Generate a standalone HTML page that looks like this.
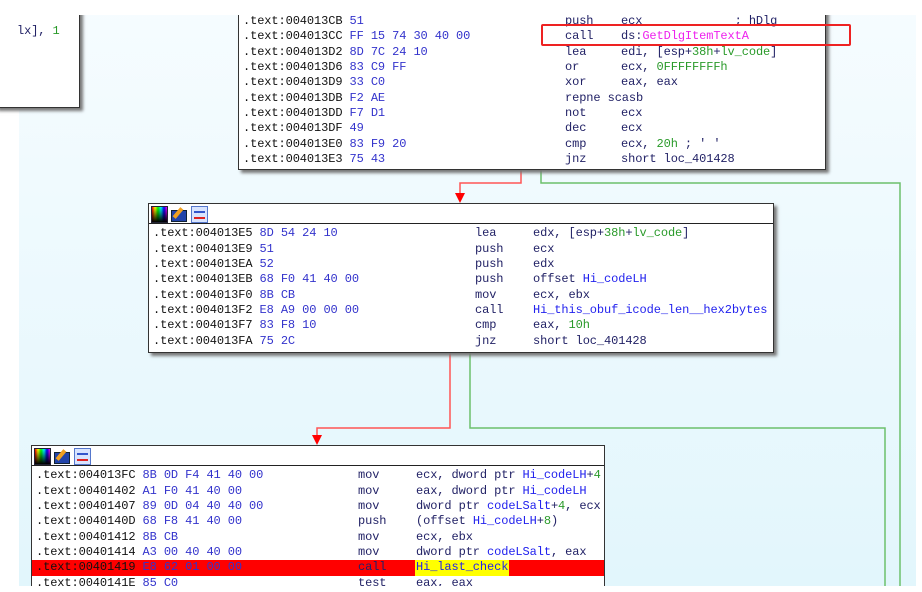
<!DOCTYPE html>
<html style="overflow:hidden"><head><meta charset="utf-8"><style>
html,body{margin:0;width:922px;height:592px;overflow:hidden;}
body{background:#fff;position:relative;font-family:"Liberation Mono",monospace;}
#bg{position:absolute;left:19px;top:0;width:897px;height:586px;background:linear-gradient(#f6fcff,#e2f6fc);}
.blk{position:absolute;background:#fff;border:1px solid #333;box-shadow:3px 3px 3px #777;}
.hdr{position:absolute;left:0;right:0;top:0;height:19px;border-bottom:1px solid #222;}
.r{position:absolute;left:4px;height:15px;font-size:12px;line-height:15px;white-space:pre;color:#111;letter-spacing:-0.1px}
.h{color:#3333cc}.m{position:absolute;color:#222266}.o{position:absolute;color:#222266}
.g{color:#2a9a2a}.b{color:#2222ee}.p{color:#ee22ee}
svg{position:absolute;left:0;top:0}
.mask{position:absolute;background:#fff;z-index:10}
</style></head><body>
<div id="bg"></div>

<div class="blk" style="left:-5px;top:-5px;width:84px;height:111px;border-left:none">
<div class="r" style="left:22px;top:28px"><span class="o" style="left:0">lx], <span class="g">1</span></span></div>
</div>

<svg width="922" height="592">
<polyline points="521,168 521,183 460,183 460,196" fill="none" stroke="#ff5555" stroke-width="1.5"/>
<polygon points="455,193 465,193 460,203" fill="#ff0000"/>
<polyline points="541,168 541,183 900,183 900,592" fill="none" stroke="#6cc06c" stroke-width="1.5"/>
<polyline points="450,351 450,428 317,428 317,438" fill="none" stroke="#ff5555" stroke-width="1.5"/>
<polygon points="312,435 322,435 317,445" fill="#ff0000"/>
<polyline points="470,351 470,428 885,428 885,592" fill="none" stroke="#6cc06c" stroke-width="1.5"/>
</svg>

<div class="blk" style="left:238px;top:-5px;width:586px;height:173px">
<div class="r" style="top:18px">.text:004013CB <span class="h">51</span><span class="m" style="left:322px">push</span><span class="o" style="left:378px">ecx             ; hDlg</span></div>
<div class="r" style="top:33px">.text:004013CC <span class="h">FF 15 74 30 40 00</span><span class="m" style="left:322px">call</span><span class="o" style="left:378px">ds:<span class="p">GetDlgItemTextA</span></span></div>
<div class="r" style="top:49px">.text:004013D2 <span class="h">8D 7C 24 10</span><span class="m" style="left:322px">lea</span><span class="o" style="left:378px">edi, [esp+<span class="g">38h</span>+<span class="g">lv_code</span>]</span></div>
<div class="r" style="top:64px">.text:004013D6 <span class="h">83 C9 FF</span><span class="m" style="left:322px">or</span><span class="o" style="left:378px">ecx, <span class="g">0FFFFFFFFh</span></span></div>
<div class="r" style="top:79px">.text:004013D9 <span class="h">33 C0</span><span class="m" style="left:322px">xor</span><span class="o" style="left:378px">eax, eax</span></div>
<div class="r" style="top:95px">.text:004013DB <span class="h">F2 AE</span><span class="m" style="left:322px">repne scasb</span></div>
<div class="r" style="top:110px">.text:004013DD <span class="h">F7 D1</span><span class="m" style="left:322px">not</span><span class="o" style="left:378px">ecx</span></div>
<div class="r" style="top:125px">.text:004013DF <span class="h">49</span><span class="m" style="left:322px">dec</span><span class="o" style="left:378px">ecx</span></div>
<div class="r" style="top:141px">.text:004013E0 <span class="h">83 F9 20</span><span class="m" style="left:322px">cmp</span><span class="o" style="left:378px">ecx, <span class="g">20h</span> ; ' '</span></div>
<div class="r" style="top:156px">.text:004013E3 <span class="h">75 43</span><span class="m" style="left:322px">jnz</span><span class="o" style="left:378px">short loc_401428</span></div>
</div>
<div style="position:absolute;left:541px;top:24px;width:306px;height:18px;border:2.5px solid #ee2222;border-radius:2px"></div>

<div class="blk" style="left:148px;top:203px;width:624px;height:148px">
<div class="hdr">
<div style="position:absolute;left:2px;top:2px;width:15px;height:15px;border:1px solid #223;background:linear-gradient(to bottom,rgba(0,0,0,0),#000),linear-gradient(to right,#f00,#ff0,#0f0,#0ff,#00f,#f0f)"></div>
<div style="position:absolute;left:22px;top:6px;width:14px;height:10px;border:1px solid #123;background:#2244aa"></div>
<div style="position:absolute;left:27px;top:3px;width:4px;height:12px;background:#f0a020;transform:rotate(40deg)"></div>
<div style="position:absolute;left:42px;top:2px;width:15px;height:15px;border:1px solid #5577cc;background:#d8e4ff"><div style="margin:4px 2px;height:2px;background:#3355cc"></div><div style="margin:0 2px;height:2px;background:#dd2222"></div></div>
</div>
<div class="r" style="top:22px">.text:004013E5 <span class="h">8D 54 24 10</span><span class="m" style="left:322px">lea</span><span class="o" style="left:380px">edx, [esp+<span class="g">38h</span>+<span class="g">lv_code</span>]</span></div>
<div class="r" style="top:38px">.text:004013E9 <span class="h">51</span><span class="m" style="left:322px">push</span><span class="o" style="left:380px">ecx</span></div>
<div class="r" style="top:53px">.text:004013EA <span class="h">52</span><span class="m" style="left:322px">push</span><span class="o" style="left:380px">edx</span></div>
<div class="r" style="top:68px">.text:004013EB <span class="h">68 F0 41 40 00</span><span class="m" style="left:322px">push</span><span class="o" style="left:380px">offset <span class="b">Hi_codeLH</span></span></div>
<div class="r" style="top:84px">.text:004013F0 <span class="h">8B CB</span><span class="m" style="left:322px">mov</span><span class="o" style="left:380px">ecx, ebx</span></div>
<div class="r" style="top:99px">.text:004013F2 <span class="h">E8 A9 00 00 00</span><span class="m" style="left:322px">call</span><span class="o" style="left:380px"><span class="b">Hi_this_obuf_icode_len__hex2bytes</span></span></div>
<div class="r" style="top:114px">.text:004013F7 <span class="h">83 F8 10</span><span class="m" style="left:322px">cmp</span><span class="o" style="left:380px">eax, <span class="g">10h</span></span></div>
<div class="r" style="top:130px">.text:004013FA <span class="h">75 2C</span><span class="m" style="left:322px">jnz</span><span class="o" style="left:380px">short loc_401428</span></div>
</div>

<div class="blk" style="left:31px;top:445px;width:572px;height:160px;overflow:hidden;box-shadow:none">
<div class="hdr">
<div style="position:absolute;left:2px;top:2px;width:15px;height:15px;border:1px solid #223;background:linear-gradient(to bottom,rgba(0,0,0,0),#000),linear-gradient(to right,#f00,#ff0,#0f0,#0ff,#00f,#f0f)"></div>
<div style="position:absolute;left:22px;top:6px;width:14px;height:10px;border:1px solid #123;background:#2244aa"></div>
<div style="position:absolute;left:27px;top:3px;width:4px;height:12px;background:#f0a020;transform:rotate(40deg)"></div>
<div style="position:absolute;left:42px;top:2px;width:15px;height:15px;border:1px solid #5577cc;background:#d8e4ff"><div style="margin:4px 2px;height:2px;background:#3355cc"></div><div style="margin:0 2px;height:2px;background:#dd2222"></div></div>
</div>
<div style="position:absolute;left:0;right:0;top:114px;height:16px;background:#ff0000"></div>
<div style="position:absolute;left:383px;top:114px;width:94px;height:16px;background:#ffff00"></div>
<div class="r" style="top:22px">.text:004013FC <span class="h">8B 0D F4 41 40 00</span><span class="m" style="left:322px">mov</span><span class="o" style="left:380px">ecx, dword ptr <span class="b">Hi_codeLH</span>+<span class="g">4</span></span></div>
<div class="r" style="top:38px">.text:00401402 <span class="h">A1 F0 41 40 00</span><span class="m" style="left:322px">mov</span><span class="o" style="left:380px">eax, dword ptr <span class="b">Hi_codeLH</span></span></div>
<div class="r" style="top:53px">.text:00401407 <span class="h">89 0D 04 40 40 00</span><span class="m" style="left:322px">mov</span><span class="o" style="left:380px">dword ptr <span class="b">codeLSalt</span>+<span class="g">4</span>, ecx</span></div>
<div class="r" style="top:68px">.text:0040140D <span class="h">68 F8 41 40 00</span><span class="m" style="left:322px">push</span><span class="o" style="left:380px">(offset <span class="b">Hi_codeLH</span>+<span class="g">8</span>)</span></div>
<div class="r" style="top:84px">.text:00401412 <span class="h">8B CB</span><span class="m" style="left:322px">mov</span><span class="o" style="left:380px">ecx, ebx</span></div>
<div class="r" style="top:99px">.text:00401414 <span class="h">A3 00 40 40 00</span><span class="m" style="left:322px">mov</span><span class="o" style="left:380px">dword ptr <span class="b">codeLSalt</span>, eax</span></div>
<div class="r" style="top:114px">.text:00401419 <span class="h">E8 62 01 00 00</span><span class="m" style="left:322px">call</span><span class="o" style="left:380px"><span class="b">Hi_last_check</span></span></div>
<div class="r" style="top:130px">.text:0040141E <span class="h">85 C0</span><span class="m" style="left:322px">test</span><span class="o" style="left:380px">eax, eax</span></div>
</div>
<div class="mask" style="left:0;top:0;width:922px;height:15px"></div>
<div class="mask" style="left:0;top:586px;width:922px;height:30px"></div>
</body></html>
